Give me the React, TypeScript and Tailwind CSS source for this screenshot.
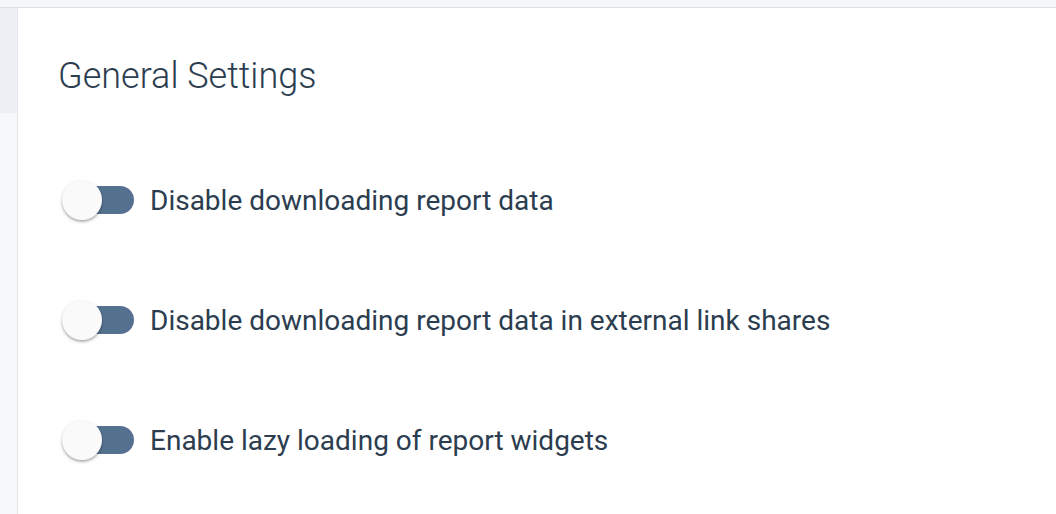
const settings = [
  "Disable downloading report data",
  "Disable downloading report data in external link shares",
  "Enable lazy loading of report widgets",
];

function Toggle() {
  return (
    <div className="relative w-[72px] h-[40px] shrink-0">
      <div className="absolute left-[4px] top-[6px] w-[68px] h-[28px] rounded-full bg-[#54718f]" />
      <div className="absolute left-0 top-0 w-[40px] h-[40px] rounded-full bg-[#fafafa] shadow-[0_2px_3px_rgba(0,0,0,0.25),0_1px_2px_rgba(0,0,0,0.12)]" />
    </div>
  );
}

export default function App() {
  return (
    <div className="w-[1056px] h-[514px] flex flex-col overflow-hidden bg-white font-['Roboto',sans-serif]">
      {/* top strip */}
      <div className="h-[8px] shrink-0 bg-[#f6f7f9] border-b border-[#dde2e8]" />

      <div className="flex flex-1">
        {/* left rail */}
        <div className="w-[18px] shrink-0 flex flex-col border-r border-[#e3e6eb]">
          <div className="h-[105px] bg-[#eceff4]" />
          <div className="flex-1 bg-[#f7f8fa]" />
        </div>

        {/* content */}
        <div className="flex-1 pl-[40px] pt-[50px]">
          <h1 className="text-[36px] leading-[36px] font-light text-[#2c3d50]">
            General Settings
          </h1>

          <div className="mt-[86px] flex flex-col gap-[80px] pl-[4px]">
            {settings.map((label) => (
              <div key={label} className="flex items-center gap-[16px] h-[40px]">
                <Toggle />
                <span className="pt-[2px] text-[28px] leading-[40px] text-[#2c3d50]">{label}</span>
              </div>
            ))}
          </div>
        </div>
      </div>
    </div>
  );
}
